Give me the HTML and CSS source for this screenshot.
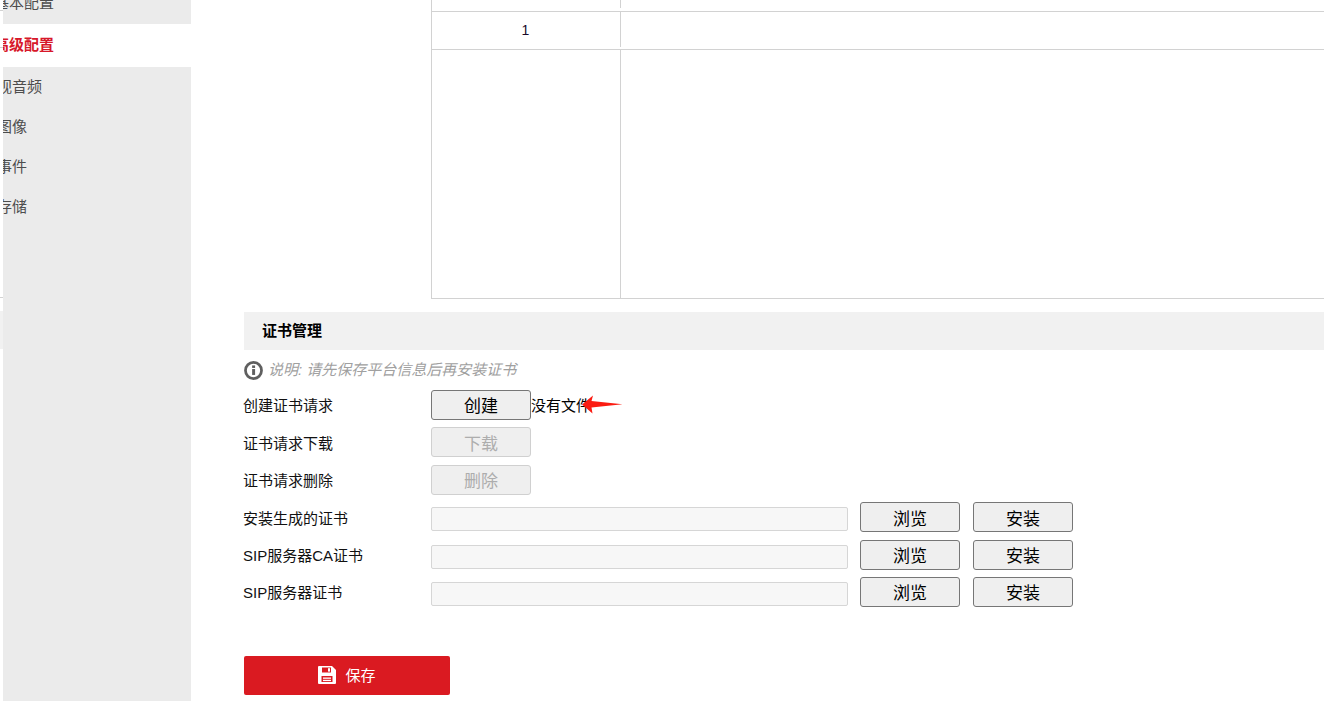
FILE: index.html
```html
<!DOCTYPE html>
<html lang="zh-CN">
<head>
<meta charset="utf-8">
<title>证书管理</title>
<link rel="stylesheet" href="styles.css">
</head>
<body>
<div class="page">
  <div class="edge">
    <div class="edge-line l1"></div>
    <div class="edge-line l2"></div>
    <div class="edge-line l3"></div>
    <div class="edge-band"></div>
  </div>
  <nav class="side">
    <div class="nav-item nav-first"><span class="clip">基本配置</span></div>
    <div class="nav-item active"><span class="clip">高级配置</span></div>
    <div class="nav-item"><span class="clip">视音频</span></div>
    <div class="nav-item"><span class="clip">图像</span></div>
    <div class="nav-item"><span class="clip">事件</span></div>
    <div class="nav-item"><span class="clip">存储</span></div>
  </nav>
  <main class="main">
    <div class="table">
      <div class="t-row t-top"><div class="c1"></div><div class="c2"></div></div>
      <div class="t-row t-one"><div class="c1">1</div><div class="c2"></div></div>
      <div class="t-row t-empty"><div class="c1"></div><div class="c2"></div></div>
    </div>
    <h2 class="section">证书管理</h2>
    <p class="note">
      <svg class="info" viewBox="0 0 18 18" aria-hidden="true"><circle cx="9" cy="9" r="7.6" fill="none" stroke="#5f5f5f" stroke-width="2.6"/><rect x="7.7" y="7.6" width="2.8" height="5.6" fill="#5f5f5f"/><rect x="7.7" y="4.2" width="2.8" height="2.4" fill="#5f5f5f"/></svg>
      <span>说明: 请先保存平台信息后再安装证书</span>
    </p>
    <div class="form">
      <div class="row r1">
        <label>创建证书请求</label>
        <button class="btn">创建</button>
        <span class="nofile">没有文件<svg class="arrow" viewBox="0 0 41 19" aria-hidden="true"><path d="M0 9.5 L11 0.5 L9.5 6 L40.5 9.3 L9.5 12.5 L10.5 18.5 Z" fill="#fb1c12"/></svg></span>
      </div>
      <div class="row"><label>证书请求下载</label><button class="btn" disabled>下载</button></div>
      <div class="row"><label>证书请求删除</label><button class="btn" disabled>删除</button></div>
      <div class="row"><label>安装生成的证书</label><input class="field" disabled><button class="btn browse">浏览</button><button class="btn install">安装</button></div>
      <div class="row"><label>SIP服务器CA证书</label><input class="field" disabled><button class="btn browse">浏览</button><button class="btn install">安装</button></div>
      <div class="row"><label>SIP服务器证书</label><input class="field" disabled><button class="btn browse">浏览</button><button class="btn install">安装</button></div>
    </div>
    <button class="save">
      <svg class="disk" viewBox="0 0 18 18" aria-hidden="true"><path fill-rule="evenodd" d="M1 0H14L18 4V17a1 1 0 0 1-1 1H1a1 1 0 0 1-1-1V1A1 1 0 0 1 1 0ZM4 1.5V6.5H13V1.5ZM3.5 10V16H14.5V10Z" fill="#fff"/><rect x="5" y="11.5" width="8" height="1.3" fill="#fff"/><rect x="5" y="13.8" width="8" height="1.3" fill="#fff"/><rect x="10" y="2.2" width="2" height="3.4" fill="#fff"/></svg>
      <span>保存</span>
    </button>
  </main>
</div>
</body>
</html>
```

FILE: styles.css
```css
* { box-sizing: border-box; }
html, body { margin: 0; padding: 0; height: 701px; overflow: hidden; background: #fff; }
body { font-family: "Liberation Sans", "Noto Sans CJK SC", sans-serif; font-size: 15px; color: #000; }
.page { display: flex; width: 1324px; height: 701px; position: relative; overflow: hidden; }

.edge { width: 3px; flex: none; display: flex; flex-direction: column; }
.edge-line { height: 1px; background: #d2d2d2; flex: none; }
.l1 { margin-top: 10px; }
.l2 { margin-top: 36px; }
.l3 { margin-top: 249px; }
.edge-band { height: 38px; margin-top: 13px; background: #f1f1f1; flex: none; }

.side { width: 188px; flex: none; background: #ebebeb; height: 701px; color: #4d4d4d; }
.nav-item { height: 40px; line-height: 39px; overflow: hidden; }
.clip { display: block; margin-left: -6px; white-space: nowrap; }
.nav-first { height: 24px; }
.nav-first .clip { margin-left: -9px; line-height: 5px; }
.active { height: 43px; line-height: 41px; background: #fff; color: #d7182a; font-weight: bold; }
.active .clip { margin-left: -9px; }

.main { flex: none; width: 1133px; padding-left: 53px; }

.table { margin-left: 187px; border-left: 1px solid #d2d2d2; border-bottom: 1px solid #d2d2d2; }
.t-row { display: grid; grid-template-columns: 189px 1fr; }
.t-top { height: 11px; }
.t-top .c1 { border-right: 1px solid #d2d2d2; height: 8px; }
.t-one { height: 38px; border-top: 1px solid #d2d2d2; }
.t-one .c1 { border-right: 1px solid #d2d2d2; text-align: center; line-height: 36px; height: 35px; font-size: 14px; padding-right: 1px; color: #1a0a2a; }
.t-empty { height: 249px; border-top: 1px solid #d2d2d2; }
.t-empty .c1 { border-right: 1px solid #d2d2d2; }

.section { margin: 13px 0 0; height: 38px; line-height: 37px; padding-left: 18px; background: #f1f1f1; font-size: 15px; font-weight: bold; }

.note { display: flex; align-items: center; gap: 5px; margin: 10px 0 0; height: 20px; color: #a0a0a0; font-style: italic; }
.info { width: 19px; height: 19px; flex: none; }
.note span { position: relative; top: -2px; }

.form { margin-top: 10px; display: flex; flex-direction: column; gap: 7.4px; }
.row { display: flex; align-items: center; height: 30px; position: relative; }
.row label { width: 187px; flex: none; color: #111; margin-left: -1px; margin-right: 1px; }
.r1 label { position: relative; top: -1px; }
.btn { width: 100px; height: 30px; flex: none; padding: 0; border: 1px solid #767676; border-radius: 3px; background: #efefef; color: #000; font: 17px "Liberation Sans", "Noto Sans CJK SC", sans-serif; }
.r1 .btn { padding-bottom: 1px; }
.btn:disabled { border-color: #d0d0d0; color: #adadad; }
.field { width: 417px; height: 24px; flex: none; margin-top: 4px; border: 1px solid #d6d6d6; border-radius: 2px; background: #f7f7f7; padding: 0; }
.browse { margin-left: 12px; }
.install { margin-left: 13px; }
.nofile { position: relative; white-space: nowrap; top: -1px; }
.arrow { position: absolute; left: 51px; top: 1px; width: 41px; height: 19px; }

.save { display: flex; align-items: center; justify-content: center; gap: 9px; width: 206px; height: 39px; margin-top: 49px; border: 0; border-radius: 2px; background: #da1a21; color: #fff; font: 15px "Liberation Sans", "Noto Sans CJK SC", sans-serif; padding: 0 0 1px 0; }
.disk { width: 18px; height: 18px; }
```
